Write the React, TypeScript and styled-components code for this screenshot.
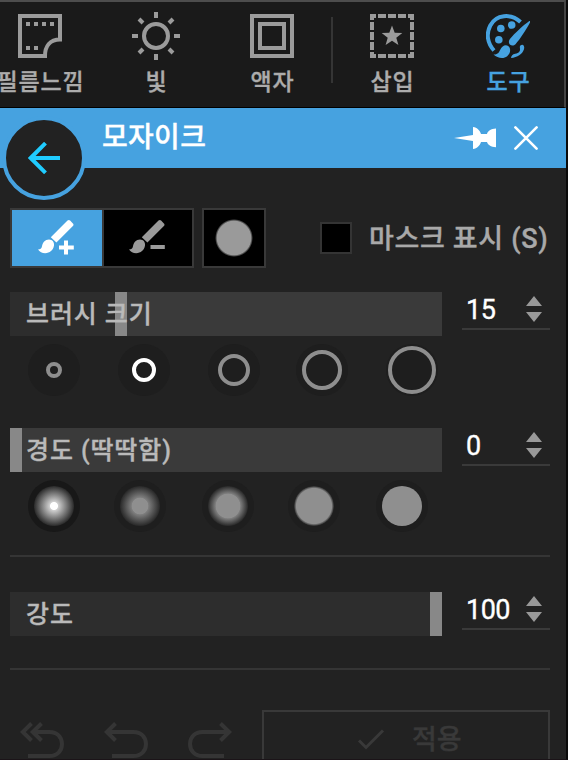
import React from 'react';
import styled, { createGlobalStyle } from 'styled-components';

const GlobalStyle = createGlobalStyle`
  * { box-sizing: border-box; }
  body { margin: 0; background: #0b0a0b; overflow: hidden; }
  button, input { font: inherit; }
`;

const Window = styled.main`
  display: flex;
  flex-direction: column;
  width: 568px;
  height: 760px;
  overflow: hidden;
  border-right: 2px solid #0a0a0a;
  border-bottom: 1px solid #1b1418;
  background: #222222;
  color: #b4b4b4;
  font-family: Roboto, 'Noto Sans CJK KR', sans-serif;
  font-weight: 500;
  -webkit-text-stroke: 0.35px currentColor;
`;

const Toolbar = styled.nav`
  display: flex;
  flex: none;
  height: 108px;
  overflow: hidden;
  border-top: 2px solid #4d4d4d;
  border-right: 2px solid #444444;
  border-bottom: 1px solid #000;
  background: #1a1a1a;
`;

const ToolButton = styled.button<{ $active?: boolean; $first?: boolean }>`
  display: flex;
  flex: none;
  flex-direction: column;
  align-items: center;
  width: 116px;
  margin: 0 0 0 ${(p) => (p.$first ? '-18px' : '0')};
  padding: 12px 0 0;
  border: 0;
  background: none;
  color: ${(p) => (p.$active ? '#46a2e0' : '#9b9b9b')};
  svg { display: block; }
`;

const ToolLabel = styled.span<{ $active?: boolean }>`
  margin-top: 11px;
  padding-left: 1px;
  color: ${(p) => (p.$active ? '#46a2e0' : '#acacac')};
  font-size: 23px;
  line-height: 28px;
  letter-spacing: 0.9px;
  white-space: nowrap;
`;

const ToolDivider = styled.i`
  flex: none;
  width: 2px;
  height: 66px;
  margin: 15px 1px 0;
  background: #353535;
`;

const Header = styled.header`
  position: relative;
  display: flex;
  flex: none;
  align-items: center;
  height: 60px;
  padding: 0 28px 0 102px;
  background: #46a2e0;
`;

const BackButton = styled.button`
  position: absolute;
  left: 2px;
  top: 8px;
  display: grid;
  place-items: center;
  width: 84px;
  height: 84px;
  padding: 0;
  border: 4px solid #46a2e0;
  border-radius: 50%;
  background: #222222;
`;

const Title = styled.h1`
  flex: 1;
  margin: 0;
  color: #fff;
  font-size: 28px;
  font-weight: 500;
  line-height: 40px;
  letter-spacing: 0.3px;
`;

const IconButton = styled.button<{ $gap?: number }>`
  display: flex;
  margin: 0 0 0 ${(p) => p.$gap ?? 0}px;
  padding: 0;
  border: 0;
  background: none;
`;

const Body = styled.section`
  display: flex;
  flex: 1;
  flex-direction: column;
  min-height: 0;
  padding: 40px 16px 0 10px;
`;

const ModeRow = styled.div`
  display: flex;
  flex: none;
  align-items: center;
  height: 60px;
  margin-bottom: 24px;
`;

const ModeGroup = styled.div`
  display: flex;
  width: 184px;
  height: 60px;
  border: 2px solid #393939;
`;

const ModeButton = styled.button<{ $active?: boolean }>`
  display: grid;
  flex: ${(p) => (p.$active ? '0 0 92px' : '1')};
  place-items: center;
  padding: 0 2px 2px 0;
  border: 0;
  border-right: ${(p) => (p.$active ? '2px solid #393939' : '0')};
  background: ${(p) => (p.$active ? '#46a2e0' : '#000')};
  color: ${(p) => (p.$active ? '#fff' : '#9a9a9a')};
`;

const BrushPreview = styled.button`
  display: grid;
  place-items: center;
  width: 64px;
  height: 60px;
  margin: 0 0 0 8px;
  padding: 0;
  border: 2px solid #393939;
  background: #000;
`;

const PreviewDot = styled.i`
  width: 38px;
  height: 38px;
  border-radius: 50%;
  background: radial-gradient(circle, #9a9a9a 16.8px, #000 19px);
`;

const MaskToggle = styled.label`
  display: flex;
  align-items: center;
  margin-left: 54px;
`;

const Checkbox = styled.span`
  width: 32px;
  height: 32px;
  border: 2px solid #343434;
  background: #000;
`;

const MaskLabel = styled.span`
  margin: 2px 0 0 17px;
  color: #a9a9a9;
  font-size: 27px;
  line-height: 36px;
  letter-spacing: 0.65px;
  white-space: nowrap;
`;

const SliderRow = styled.div`
  display: flex;
  flex: none;
  justify-content: space-between;
  width: 540px;
  height: 44px;
`;

const Track = styled.div<{ $full?: boolean }>`
  display: grid;
  width: 432px;
  background: ${(p) => (p.$full ? '#2d2d2d' : '#3a3a3a')};
`;

const Fill = styled.div`
  grid-area: 1 / 1;
  border-right: 12px solid #888888;
  background: #2d2d2d;
`;

const SliderLabel = styled.span`
  z-index: 1;
  grid-area: 1 / 1;
  padding: 2px 0 0 16px;
  color: #bababa;
  font-size: 25px;
  line-height: 42px;
  letter-spacing: 0.9px;
  white-space: pre;
`;

const NumberField = styled.div`
  display: flex;
  align-items: flex-start;
  justify-content: space-between;
  width: 88px;
  height: 38px;
  padding: 0 8px 0 4px;
  border-bottom: 2px solid #3a3a3a;
  color: #fff;
  font-size: 27px;
  font-weight: 400;
  line-height: 37px;
  letter-spacing: -0.5px;
`;

const Spinner = styled.span`
  display: flex;
  padding-top: 4px;
`;

const PresetRow = styled.div<{ $gap: number }>`
  display: flex;
  flex: none;
  gap: ${(p) => p.$gap}px;
  height: 52px;
  margin: 8px 0 0 18px;
`;

const Preset = styled.button<{ $dark?: boolean; $nudge?: number }>`
  display: grid;
  flex: none;
  place-items: center;
  width: 52px;
  height: 52px;
  margin: 0 0 0 ${(p) => p.$nudge ?? 0}px;
  padding: 0;
  border: 0;
  border-radius: 50%;
  background: ${(p) => (p.$dark ? '#181818' : '#1e1e1e')};
`;

const Ring = styled.i<{ $size: number; $active?: boolean }>`
  width: ${(p) => p.$size}px;
  height: ${(p) => p.$size}px;
  border: 4px solid ${(p) => (p.$active ? '#fff' : '#8e8e8e')};
  border-radius: 50%;
`;

const SoftDot = styled.i<{ $core: number; $active?: boolean }>`
  width: 40px;
  height: 40px;
  border-radius: 50%;
  background: ${(p) =>
    p.$core === 20
      ? '#8f8f8f'
      : p.$active
        ? `radial-gradient(circle, #fff ${p.$core - 0.4}px, #cfcfcf ${p.$core + 0.4}px, #2a2a2a 20px)`
        : `radial-gradient(circle, #8f8f8f ${p.$core}px, ${p.$core < 17 ? '#7e7e7e' : '#8f8f8f'} ${p.$core + 0.6}px, #282828 20px)`};
`;

const Rule = styled.hr<{ $top: number; $bottom: number }>`
  flex: none;
  width: 540px;
  height: 2px;
  margin: ${(p) => p.$top}px 0 ${(p) => p.$bottom}px;
  border: 0;
  background: #353535;
`;

const Spacer = styled.div`
  flex: none;
  height: 32px;
`;

const Footer = styled.footer`
  display: flex;
  flex: none;
  width: 540px;
  color: #353535;
`;

const History = styled.div`
  display: flex;
  width: 252px;
  padding: 12px 0 0 10px;
  gap: 40px;
`;

const Apply = styled.button`
  display: flex;
  width: 288px;
  height: 60px;
  padding: 7px 0 0 93px;
  border: 2px solid #393939;
  background: none;
  color: #393939;
  font-size: 27px;
  font-weight: 500;
  line-height: 42px;
`;

const CheckSlot = styled.span`
  display: flex;
  padding-top: 9px;
`;

const ApplyText = styled.span`
  margin-left: 27px;
`;

const FilmIcon = () => (
  <svg width="44" height="44" fill="none">
    <path d="M2 2h40v23.5C32 25.500 27 32 27 42H2z" stroke="currentColor" strokeWidth="4" />
    <path d="M8 10h4M16 10h4M24 10h4M32 10h4M8 34h4M16 34h4" stroke="currentColor" strokeWidth="4" />
  </svg>
);

const SunIcon = () => (
  <svg width="48" height="44" viewBox="0 2 48 44" overflow="visible" fill="none" stroke="currentColor" strokeWidth="4">
    <circle cx="24" cy="24" r="12" />
    <path d="M24 0v6M24 42v6M0 24h6M42 24h6M7 7l4 4M37 37l4 4M7 41l4-4M37 11l4-4" />
  </svg>
);

const FrameIcon = () => (
  <svg width="44" height="44" fill="none" stroke="currentColor" strokeWidth="4">
    <rect x="2" y="2" width="40" height="40" />
    <rect x="10" y="10" width="24" height="24" />
  </svg>
);

const InsertIcon = () => (
  <svg width="44" height="44" fill="none" stroke="currentColor" strokeWidth="4">
    <path d="M0 2h6M8 2h8M18 2h8M28 2h8M38 2h6M0 42h6M8 42h8M18 42h8M28 42h8M38 42h6M2 0v6M2 8v8M2 18v8M2 28v8M2 38v6M42 0v6M42 8v8M42 18v8M42 28v8M42 38v6" />
    <path d="M22 11.500l2.700 7.200 7.600.3-6 4.700 2.100 7.300-6.400-4.200-6.400 4.200 2.100-7.300-6-4.700 7.600-.3z" fill="currentColor" stroke="none" />
  </svg>
);

const PaletteIcon = () => (
  <svg width="44" height="44" fill="none">
    <path d="M34.500 8C25-1 10 .5 4.300 11.500C-.2 20 1.500 29.500 8 36.500" stroke="currentColor" strokeWidth="4" />
    <g fill="currentColor">
      <circle cx="14.800" cy="14.500" r="3.800" />
      <circle cx="25.700" cy="11" r="3.800" />
      <circle cx="12.800" cy="25.700" r="3.800" />
      <path d="M43 7.200c.8-.5 1.600.3 1.100 1.200C41 14.500 34 25.500 29.500 30.200c-1.700 1.800-4.300 1.700-5.700.2-1.400-1.500-1.200-3.900.3-5.700C28.500 19.500 37.500 11 43 7.200z" />
      <path d="M22.500 32.300c2.700 2.500 1.900 7.400-1.300 9.900C17.300 45.300 11.300 44 7.500 40.500c4.500.3 5.500-2 7-5.200 1.500-3.600 5.300-5.500 8-3z" />
      <path d="M34.700 31.300c2.100-1.700 4.300.7 3.300 4C36.300 40.300 31.500 43.500 25 44c.3-2.500 1.500-3.700 4.200-4.300 4-.9 5.300-2.500 4.700-5.800-.2-1.200.1-2 .8-2.600z" />
    </g>
  </svg>
);

const BackIcon = () => (
  <svg width="32" height="32" fill="none" stroke="#20ccff" strokeWidth="4">
    <path d="M32 16H3M17.500 1.200L2.700 16l14.800 14.800" />
  </svg>
);

const PinIcon = () => (
  <svg width="42" height="22" fill="#fff">
    <path d="M0 11l19-3V0c4.300.6 7 3.500 8 7h6c.8-2.800 3.800-5.200 9-5.400v18.600c-5.200-.2-8.200-2.500-9-5.200h-6c-1 3.500-3.700 6.400-8 7v-8z" />
  </svg>
);

const CloseIcon = () => (
  <svg width="24" height="24" stroke="#fff" strokeWidth="2.600" strokeLinecap="round">
    <path d="M1.400 1.400l21.200 21.200M22.600 1.400L1.400 22.600" />
  </svg>
);

const BrushIcon = ({ plus }: { plus?: boolean }) => (
  <svg width="36" height="36" fill="currentColor">
    <path d="M29.500 1.600c.9-.8 1.800-.8 2.600 0l2.800 2.900c.8.8.8 1.700 0 2.500L18.400 23.500l-5.600-5.300z" />
    <path d="M11 20.400c3.500 0 5.500 2.800 5 6.200-.7 4.600-4.300 7.600-8.800 7.600-3 0-5.700-1.500-7.200-3.700 2.300-.1 3.600-1 4-3.200.6-4 3-6.900 7-6.900z" />
    {plus ? <path d="M26 21.500h4v5h5.800v4H30v5h-4v-5h-5v-4h5z" /> : <path d="M21.500 26h14.300v4H21.500z" />}
  </svg>
);

const Arrows = () => (
  <Spinner>
    <svg width="16" height="26" fill="#999">
      <path d="M8 0l8 10H0zM0 16h16L8 26z" />
    </svg>
  </Spinner>
);

const UndoIcon = ({ double }: { double?: boolean }) => (
  <svg width="44" height="38" fill="none" stroke="currentColor" strokeWidth="4">
    {double ? (
      <path d="M11.500 1.500L2.800 10l8.700 8.500M21.500 1.500L12.800 10l8.700 8.500M13 10h16.500c7.500 0 12.500 5 12.500 12s-5 12-12.500 12H8" />
    ) : (
      <path d="M11.500 1.500L2.800 10l8.700 8.500M3 10h26.500c7.500 0 12.500 5 12.500 12s-5 12-12.500 12H8" />
    )}
  </svg>
);

const RedoIcon = () => (
  <svg width="44" height="38" fill="none" stroke="currentColor" strokeWidth="4">
    <path d="M32.500 1.500l8.700 8.500-8.700 8.500M41 10H14.500C7 10 2 15 2 22s5 12 12.500 12H36" />
  </svg>
);

const CheckIcon = () => (
  <svg width="28" height="22" fill="none" stroke="currentColor" strokeWidth="3">
    <path d="M2 12.500l7 7L26 2.500" />
  </svg>
);

interface SliderProps {
  label: string;
  value: number;
  fill: number;
}

const Slider = ({ label, value, fill }: SliderProps) => (
  <SliderRow>
    <Track $full={value === 100}>
      <Fill style={{ width: fill }} />
      <SliderLabel>{label}</SliderLabel>
    </Track>
    <NumberField>
      <span>{value}</span>
      <Arrows />
    </NumberField>
  </SliderRow>
);

const tools = [
  { label: '필름느낌', icon: <FilmIcon /> },
  { label: '빛', icon: <SunIcon /> },
  { label: '액자', icon: <FrameIcon /> },
];

export default function App() {
  return (
    <>
      <GlobalStyle />
      <Window>
        <Toolbar>
          {tools.map((tool, i) => (
            <ToolButton key={tool.label} $first={i === 0}>
              {tool.icon}
              <ToolLabel>{tool.label}</ToolLabel>
            </ToolButton>
          ))}
          <ToolDivider />
          <ToolButton>
            <InsertIcon />
            <ToolLabel>삽입</ToolLabel>
          </ToolButton>
          <ToolButton $active>
            <PaletteIcon />
            <ToolLabel $active>도구</ToolLabel>
          </ToolButton>
        </Toolbar>
        <Header>
          <BackButton><BackIcon /></BackButton>
          <Title>모자이크</Title>
          <IconButton><PinIcon /></IconButton>
          <IconButton $gap={18}><CloseIcon /></IconButton>
        </Header>
        <Body>
          <ModeRow>
            <ModeGroup>
              <ModeButton $active><BrushIcon plus /></ModeButton>
              <ModeButton><BrushIcon /></ModeButton>
            </ModeGroup>
            <BrushPreview><PreviewDot /></BrushPreview>
            <MaskToggle>
              <Checkbox />
              <MaskLabel>마스크 표시 (S)</MaskLabel>
            </MaskToggle>
          </ModeRow>

          <Slider label="브러시 크기" value={15} fill={117} />
          <PresetRow $gap={38}>
            {[16, 24, 32, 40, 48].map((size) => (
              <Preset key={size} $nudge={size === 40 ? -2 : 0}>
                <Ring $size={size} $active={size === 24} />
              </Preset>
            ))}
          </PresetRow>

          <Spacer />
          <Slider label="경도 (딱딱함)" value={0} fill={12} />
          <PresetRow $gap={35}>
            {[4, 8, 12, 17, 20].map((core, i) => (
              <Preset key={core} $dark={i === 0} $nudge={[0, -1, 1, -1, 1][i]}>
                <SoftDot $core={core} $active={i === 0} />
              </Preset>
            ))}
          </PresetRow>

          <Rule $top={23} $bottom={35} />
          <Slider label="강도" value={100} fill={432} />
          <Rule $top={32} $bottom={40} />

          <Footer>
            <History>
              <UndoIcon double />
              <UndoIcon />
              <RedoIcon />
            </History>
            <Apply>
              <CheckSlot><CheckIcon /></CheckSlot>
              <ApplyText>적용</ApplyText>
            </Apply>
          </Footer>
        </Body>
      </Window>
    </>
  );
}
